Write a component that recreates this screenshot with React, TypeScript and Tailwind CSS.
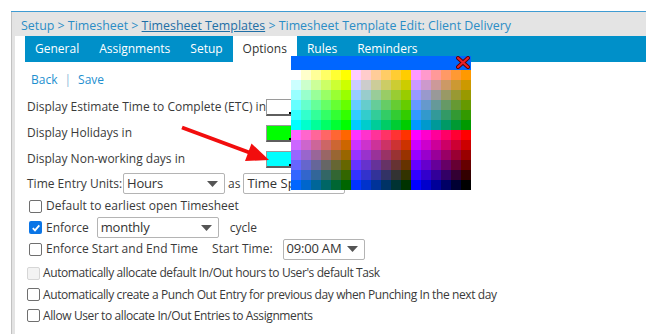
import React from "react";

const LEVELS = ["ff", "cc", "99", "66", "33", "00"];

function paletteColor(row: number, col: number) {
  const block = Math.floor(col / 6) + 3 * Math.floor(row / 6);
  return `#${LEVELS[row % 6]}${LEVELS[block]}${LEVELS[col % 6]}`;
}

const TABS = ["General", "Assignments", "Setup", "Options", "Rules", "Reminders"];

function ColorBox({ color }: { color: string }) {
  return (
    <div className="relative h-[17px] w-[26px] border border-[#9a9a9a] border-b-2 border-b-[#5e5e5e]">
      <div className="h-full w-full" style={{ background: color }} />
      <div className="absolute bottom-0 right-0 h-[2px] w-[2px] bg-black" />
    </div>
  );
}

function Check({ checked, disabled }: { checked?: boolean; disabled?: boolean }) {
  if (checked) {
    return (
      <span className="flex h-[13px] w-[13px] shrink-0 items-center justify-center rounded-[2px] bg-[#0b75e6]">
        <svg width="10" height="10" viewBox="0 0 10 10">
          <path d="M1.8 5.2 L4 7.4 L8.3 2.4" fill="none" stroke="white" strokeWidth="1.8" />
        </svg>
      </span>
    );
  }
  return (
    <span
      className={
        disabled
          ? "h-[13px] w-[13px] shrink-0 rounded-[2px] border border-[#d6d6d6] bg-[#f3f3f3]"
          : "h-[13px] w-[13px] shrink-0 rounded-[2px] border border-[#6f6f6f] bg-white"
      }
    />
  );
}

function Select({ value, width }: { value: string; width: string }) {
  return (
    <div
      className={`flex h-[21px] shrink-0 items-center justify-between whitespace-nowrap rounded-[2px] border border-[#b4b4b4] bg-white pl-[3px] pr-[6px] text-[13px] tracking-[-0.2px] text-[#333] ${width}`}
    >
      <span>{value}</span>
      <svg width="11" height="6" viewBox="0 0 11 6">
        <path d="M0 0 H11 L5.5 6 Z" fill="#555" />
      </svg>
    </div>
  );
}

function ColorPicker() {
  return (
    <div className="absolute left-[291px] top-[56px] w-[180px]">
      <div className="flex h-[14px] justify-end bg-[#0066ff] pr-[1px]">
        <svg width="14" height="13" viewBox="0 0 14 13">
          <path d="M2 2 L12 11 M12 2 L2 11" stroke="#5a0000" strokeWidth="4" strokeLinecap="round" />
          <path d="M2 2 L12 11 M12 2 L2 11" stroke="#e8202a" strokeWidth="2.2" strokeLinecap="round" />
        </svg>
      </div>
      <div className="grid grid-cols-[repeat(18,10px)]">
        {Array.from({ length: 12 * 18 }).map((_, i) => (
          <div
            key={i}
            className="h-[10px] w-[10px]"
            style={{ background: paletteColor(Math.floor(i / 18), i % 18) }}
          />
        ))}
      </div>
    </div>
  );
}

export default function App() {
  return (
    <div
      className="relative h-[335px] w-[658px] overflow-hidden whitespace-nowrap bg-white text-[12px] text-[#3a3a3a]"
      style={{ fontFamily: "'Open Sans', sans-serif" }}
    >
      <div className="ml-[11px] mt-[11px] w-[635px] border-t border-[#3f9bd2]">
        <div className="flex">
          <div className="w-[4px] self-stretch border-l border-[#c2c2c2] bg-[#e3e3e3]" />
          <div className="flex-1 pb-[8px]">
            <div className="flex h-[24px] items-center bg-[#e4e4e4] pl-[6px] pt-[4px] text-[12.4px] text-[#2b8dc6]">
              Setup &gt; Timesheet &gt;&nbsp;
              <span className="text-[#1f6fa6] underline">Timesheet Templates</span>
              &nbsp;&gt; Timesheet Template Edit: Client Delivery
            </div>
            <div className="ml-[10px] flex h-[26px] bg-[#0090c9] text-white">
              {TABS.map((t) => (
                <div
                  key={t}
                  className={
                    t === "Options"
                      ? "flex items-center bg-white px-[10px] text-[#333]"
                      : "flex items-center px-[10px]"
                  }
                >
                  {t}
                </div>
              ))}
            </div>

            <div className="pl-[12px]">
              <div className="mt-[9px] flex h-[18px] items-center pl-[4px] text-[#1e8fcf]">
                Back <span className="mx-[7px] text-[#8bb9d8]">|</span> Save
              </div>

              <div className="mt-[5px] grid grid-cols-[239px_auto] items-center">
                <div className="flex h-[26px] items-center">Display Estimate Time to Complete (ETC) in</div>
                <ColorBox color="#ffffff" />
                <div className="flex h-[26px] items-center">Display Holidays in</div>
                <ColorBox color="#00ff00" />
                <div className="flex h-[26px] items-center">Display Non-working days in</div>
                <ColorBox color="#00ffff" />
              </div>

              <div className="flex h-[23px] items-center">
                <span className="w-[96px]">Time Entry Units:</span>
                <Select value="Hours" width="w-[102px]" />
                <span className="mx-[3px]">as</span>
                <div className="flex h-[21px] w-[102px] items-center rounded-[2px] border border-[#b4b4b4] pl-[3px] text-[13px] text-[#333]">
                  Time Spa
                </div>
              </div>

              <div className="flex h-[22px] items-center gap-[4px] pl-[2px]">
                <Check />
                <span>Default to earliest open Timesheet</span>
              </div>
              <div className="flex h-[21px] items-center gap-[4px] pl-[2px]">
                <Check checked />
                <span>Enforce</span>
                <Select value="monthly" width="ml-[4px] w-[122px] h-[20px]" />
                <span className="ml-[7px]">cycle</span>
              </div>
              <div className="flex h-[22px] items-center gap-[4px] pl-[2px]">
                <Check />
                <span>Enforce Start and End Time</span>
                <span className="ml-[10px]">Start Time:</span>
                <Select value="09:00 AM" width="ml-[6px] w-[82px] h-[20px]" />
              </div>

              <div className="mt-[2px] tracking-[-0.4px]">
                <div className="flex h-[22px] items-center gap-[3px]">
                  <Check disabled />
                  <span>Automatically allocate default In/Out hours to User's default Task</span>
                </div>
                <div className="flex h-[21px] items-center gap-[3px]">
                  <Check />
                  <span>Automatically create a Punch Out Entry for previous day when Punching In the next day</span>
                </div>
                <div className="flex h-[21px] items-center gap-[3px]">
                  <Check />
                  <span>Allow User to allocate In/Out Entries to Assignments</span>
                </div>
              </div>
            </div>
          </div>
        </div>
      </div>

      <ColorPicker />

      <svg className="pointer-events-none absolute left-0 top-0" width="658" height="335">
        <line x1="182" y1="127.5" x2="252" y2="153.5" stroke="#f20d0d" strokeWidth="4" />
        <polygon points="269,160 251.5,143.5 245,161" fill="#f20d0d" />
      </svg>
    </div>
  );
}
